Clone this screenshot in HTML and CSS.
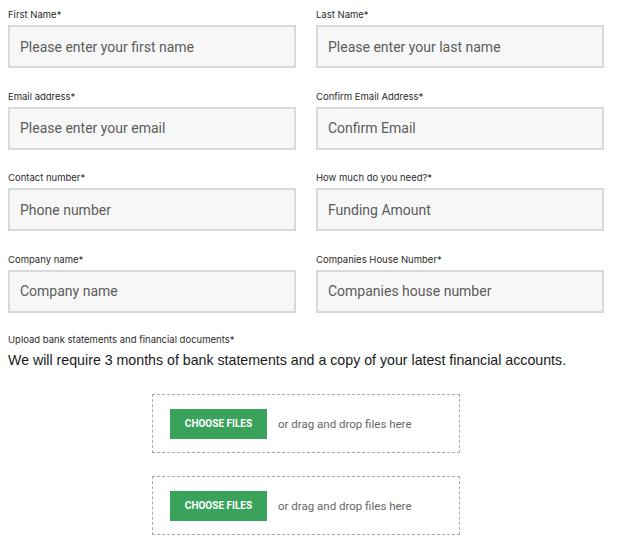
FILE: index.html
```html
<!DOCTYPE html>
<html lang="en">
<head>
<meta charset="utf-8">
<title>Application form</title>
<link rel="stylesheet" href="styles.css">
</head>
<body>
<form class="form">
  <div class="grid">
    <div class="field">
      <label class="label">First Name*</label>
      <input class="input" type="text" placeholder="Please enter your first name">
    </div>
    <div class="field">
      <label class="label">Last Name*</label>
      <input class="input" type="text" placeholder="Please enter your last name">
    </div>
    <div class="field">
      <label class="label">Email address*</label>
      <input class="input" type="text" placeholder="Please enter your email">
    </div>
    <div class="field">
      <label class="label">Confirm Email Address*</label>
      <input class="input" type="text" placeholder="Confirm Email">
    </div>
    <div class="field">
      <label class="label">Contact number*</label>
      <input class="input" type="text" placeholder="Phone number">
    </div>
    <div class="field">
      <label class="label">How much do you need?*</label>
      <input class="input" type="text" placeholder="Funding Amount">
    </div>
    <div class="field">
      <label class="label">Company name*</label>
      <input class="input" type="text" placeholder="Company name">
    </div>
    <div class="field">
      <label class="label">Companies House Number*</label>
      <input class="input" type="text" placeholder="Companies house number">
    </div>
  </div>
  <div class="upload">
    <div class="label">Upload bank statements and financial documents*</div>
    <p class="note">We will require 3 months of bank statements and a copy of your latest financial accounts.</p>
    <div class="drops">
      <div class="drop">
        <button type="button" class="choose">CHOOSE FILES</button>
        <span class="hint">or drag and drop files here</span>
      </div>
      <div class="drop">
        <button type="button" class="choose">CHOOSE FILES</button>
        <span class="hint">or drag and drop files here</span>
      </div>
    </div>
  </div>
</form>
</body>
</html>
```
FILE: styles.css
```css
* { box-sizing: border-box; }
html, body { margin: 0; background: #fff; }
body { padding: 8px 20px 0 8px; font-family: "Liberation Sans", Arial, sans-serif; }
.form { width: 596px; }
.grid {
  display: grid;
  grid-template-columns: 288px 288px;
  column-gap: 20px;
  row-gap: 21.5px;
}
.field { display: flex; flex-direction: column; }
.label {
  font-family: "Inter", sans-serif;
  font-size: 9.5px;
  line-height: 14px;
  color: #2b2b2b;
  margin-bottom: 3px;
}
.input {
  height: 43px;
  border: 2px solid #d9d9d9;
  background: #f7f7f7;
  padding: 0 10px;
  font-family: "Roboto", sans-serif;
  font-size: 14px;
  color: #333;
  outline: none;
}
.input::placeholder { color: #5c5c5c; opacity: 1; }
.upload { margin-top: 20.5px; }
.upload .label { margin-bottom: 3px; }
.note {
  margin: 0;
  font-family: "Liberation Sans", Arial, sans-serif;
  font-size: 14.2px;
  line-height: 20px;
  color: #1a1a1a;
}
.drops {
  margin-top: 24px;
  display: flex;
  flex-direction: column;
  align-items: center;
  gap: 23px;
}
.drop {
  width: 308px;
  height: 59px;
  border: 1px dashed #a9a3d9;
  display: flex;
  align-items: center;
  padding-left: 17px;
  gap: 11px;
}
.choose {
  width: 97px;
  height: 30px;
  border: 0;
  background: #3aa35b;
  color: #fff;
  font-family: "Roboto", sans-serif;
  font-weight: 700;
  font-size: 10px;
  padding: 0;
}
.hint {
  font-family: "Roboto", sans-serif;
  font-size: 11.5px;
  color: #666;
}
```
